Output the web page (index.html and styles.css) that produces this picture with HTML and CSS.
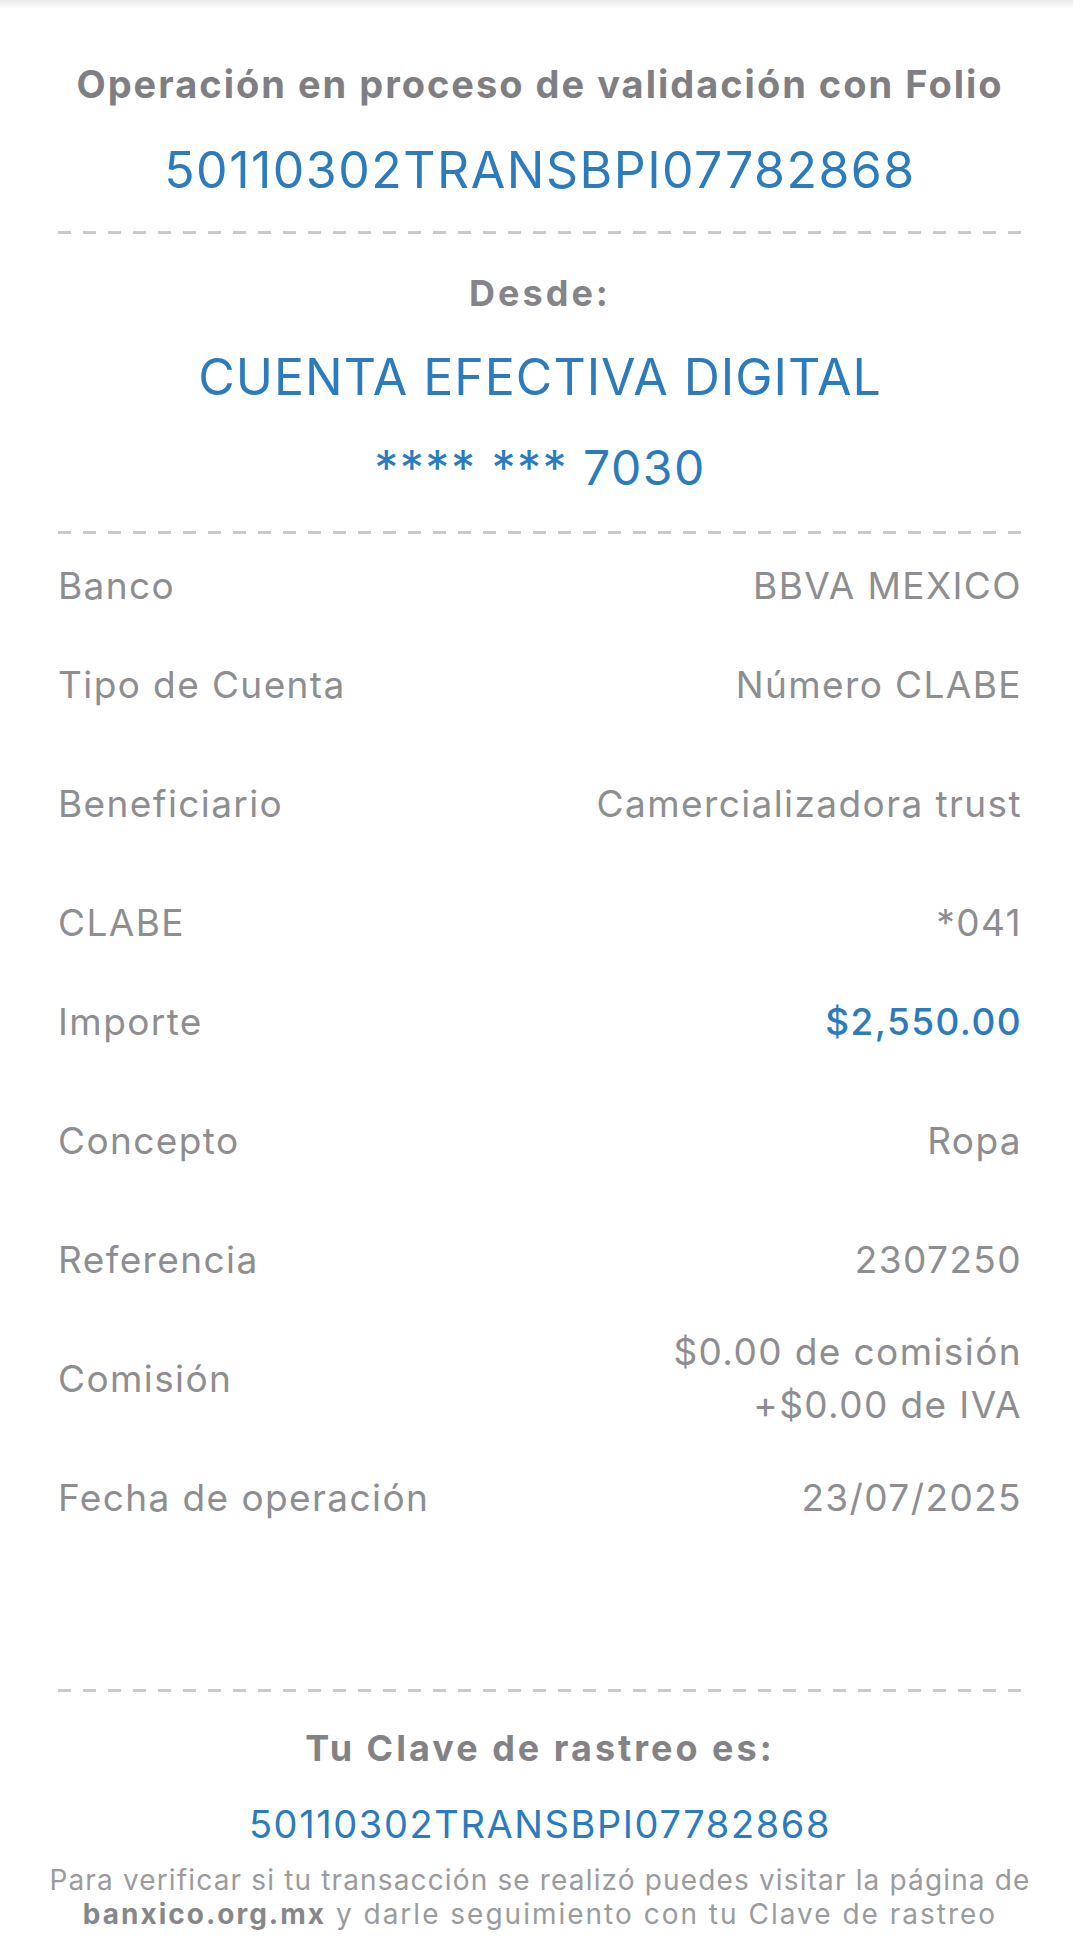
FILE: index.html
```html
<!DOCTYPE html>
<html lang="es">
<head>
    <meta charset="UTF-8">
    <meta name="viewport" content="width=device-width, initial-scale=1.0">
    <title>Comprobante de transferencia</title>
    <link rel="stylesheet" href="styles.css">
</head>
<body>
    <div class="receipt">
        <div class="receipt-head">
            <p class="title">Operación en proceso de validación con Folio</p>
            <p class="folio">50110302TRANSBPI07782868</p>
        </div>

        <div class="divider"></div>

        <div class="origin">
            <p class="origin-label">Desde:</p>
            <p class="origin-name">CUENTA EFECTIVA DIGITAL</p>
            <p class="origin-number">**** *** 7030</p>
        </div>

        <div class="divider"></div>

        <div class="details">
            <div class="row">
                <span class="label">Banco</span>
                <span class="value">BBVA MEXICO</span>
            </div>
            <div class="row row-tight">
                <span class="label">Tipo de Cuenta</span>
                <span class="value">Número CLABE</span>
            </div>
            <div class="row">
                <span class="label">Beneficiario</span>
                <span class="value">Camercializadora trust</span>
            </div>
            <div class="row">
                <span class="label">CLABE</span>
                <span class="value">*041</span>
            </div>
            <div class="row row-tight">
                <span class="label">Importe</span>
                <span class="value amount">$2,550.00</span>
            </div>
            <div class="row">
                <span class="label">Concepto</span>
                <span class="value">Ropa</span>
            </div>
            <div class="row">
                <span class="label">Referencia</span>
                <span class="value">2307250</span>
            </div>
            <div class="row">
                <span class="label">Comisión</span>
                <span class="value multi">$0.00 de comisión<br>+$0.00 de IVA</span>
            </div>
            <div class="row">
                <span class="label">Fecha de operación</span>
                <span class="value">23/07/2025</span>
            </div>
        </div>

        <div class="divider divider-bottom"></div>

        <div class="tracking">
            <p class="tracking-label">Tu Clave de rastreo es:</p>
            <p class="tracking-code">50110302TRANSBPI07782868</p>
            <p class="tracking-note">Para verificar si tu transacción se realizó puedes visitar la página de<br><span class="note-second"><b>banxico.org.mx</b> y darle seguimiento con tu Clave de rastreo</span></p>
        </div>
    </div>
</body>
</html>
```

FILE: styles.css
```css
body {
    margin: 0;
    font-family: Inter, "Liberation Sans", Arial, sans-serif;
    background: linear-gradient(#e9e9e9, #ffffff 9px) no-repeat #ffffff;
    color: #8b8b8e;
}

p {
    margin: 0;
}

.receipt {
    padding: 0 51px 0 58px;
    text-align: center;
}

.title {
    margin-top: 54px;
    font-size: 38px;
    line-height: 60px;
    font-weight: 700;
    letter-spacing: 2px;
    color: #7f7f83;
}

.folio {
    margin-top: 26px;
    font-size: 50px;
    line-height: 60px;
    letter-spacing: 1.5px;
    color: #2b7bbd;
}

.divider {
    height: 3px;
    margin-top: 31px;
    background: repeating-linear-gradient(to right, #cacaca 0 13px, transparent 13px 25px);
}

.origin-label {
    margin-top: 34px;
    font-size: 36px;
    line-height: 50px;
    font-weight: 700;
    letter-spacing: 3px;
    color: #858589;
}

.origin-name {
    margin-top: 27px;
    font-size: 50px;
    line-height: 64px;
    letter-spacing: 1px;
    color: #2b7bbd;
}

.origin-number {
    margin-top: 29px;
    font-size: 48px;
    line-height: 60px;
    letter-spacing: 1.5px;
    color: #2b7bbd;
}

.origin + .divider {
    margin-top: 33px;
}

.details {
    padding-top: 21px;
}

.row {
    display: flex;
    justify-content: space-between;
    align-items: center;
    height: 60px;
    margin-top: 59px;
    font-size: 37px;
    letter-spacing: 1.4px;
    text-align: left;
}

.row:first-child {
    margin-top: 0;
}

.row-tight {
    margin-top: 39px;
}

.label {
    color: #8e8e91;
}

.value {
    text-align: right;
    color: #8e8e91;
}

.value.multi {
    line-height: 53px;
}

.amount {
    color: #2b7bbd;
    font-weight: 500;
}

.divider-bottom {
    margin-top: 162px;
}

.tracking-label {
    margin-top: 34px;
    font-size: 36px;
    line-height: 44px;
    font-weight: 700;
    letter-spacing: 3px;
    color: #838387;
}

.tracking-code {
    margin-top: 32px;
    font-size: 38px;
    line-height: 44px;
    letter-spacing: 1.6px;
    color: #2b7bbd;
}

.tracking-note {
    margin: 17px -25px 0 -25px;
    font-size: 28px;
    line-height: 34px;
    letter-spacing: 1.15px;
    color: #9b9b9e;
}

.note-second {
    letter-spacing: 2px;
}

.tracking-note b {
    color: #87878a;
}
```
